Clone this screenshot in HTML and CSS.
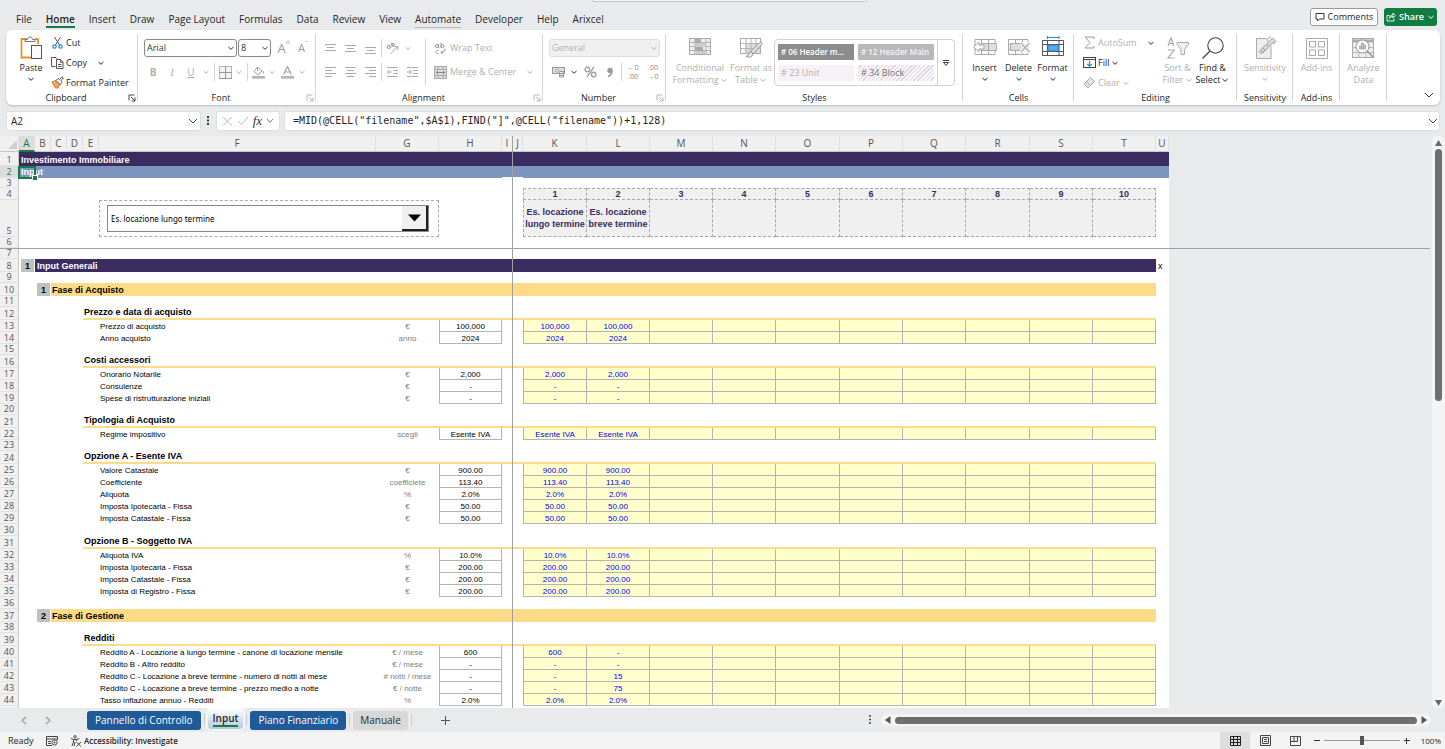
FILE: index.html
```html
<!DOCTYPE html>
<html lang="en">
<head>
<meta charset="utf-8">
<title>Investimento Immobiliare</title>
<link rel="stylesheet" href="styles.css">
</head>
<body>
<svg class="defs" aria-hidden="true">
  <symbol id="chev" viewBox="0 0 8 8"><path d="M1.500 3 4 5.300 6.500 3" fill="none" stroke="currentColor"/></symbol>
  <symbol id="launch" viewBox="0 0 8 8"><path d="M1 6.500V1H6.500M3 3 7 7M7 3.500V7H3.500" fill="none" stroke="currentColor"/></symbol>
</svg>

<header class="top">
  <div class="search-edge"></div>
  <nav class="tabs" aria-label="Ribbon tabs">
    <a href="#">File</a><a href="#" class="active">Home</a><a href="#">Insert</a><a href="#">Draw</a><a href="#">Page Layout</a><a href="#">Formulas</a><a href="#">Data</a><a href="#">Review</a><a href="#">View</a><a href="#" class="hint">Automate</a><a href="#">Developer</a><a href="#">Help</a><a href="#">Arixcel</a>
  </nav>
  <button class="comments"><svg width="10" height="10" viewBox="0 0 10 10"><path d="M1 1.500H9V7H4.500L2.500 9V7H1Z" fill="none" stroke="#333"/></svg>Comments</button>
  <button class="share"><svg width="10" height="10" viewBox="0 0 10 10"><path d="M3.500 3.500H1V9H8V6.500M3.500 6.500C3.500 4 5 3 7 3V1L9.300 3.500 7 6V4.300C5.500 4.300 4.300 5 3.500 6.500Z" fill="none" stroke="#fff" stroke-width=".9"/></svg>Share<svg class="chev"><use href="#chev"/></svg></button>
</header>

<section class="ribbon" aria-label="Home ribbon">
  <div class="group g-clipboard">
    <div class="body">
      <button class="big paste"><svg width="24" height="24" viewBox="0 0 24 24"><path d="M8 3H2.500V21.500H12M16 3H19V8" fill="none" stroke="#e8912d" stroke-width="1.800"/><path d="M6 5.500V3.500H8.500C9 .2 13 .2 13.500 3.500H16V5.500Z" fill="#fff" stroke="#777"/><rect x="12.500" y="9.500" width="10" height="13" fill="#fafafa" stroke="#555"/></svg><span>Paste</span><svg class="chev"><use href="#chev"/></svg></button>
      <div class="stack">
        <button><svg width="13" height="13" viewBox="0 0 13 13"><path d="M3.500 1 8.500 9M9.500 1 4.500 9" fill="none" stroke="#555"/><circle cx="3.500" cy="10.500" r="1.700" fill="none" stroke="#2b8ad6" stroke-width="1.200"/><circle cx="9.500" cy="10.500" r="1.700" fill="none" stroke="#2b8ad6" stroke-width="1.200"/></svg>Cut</button>
        <button><svg width="13" height="13" viewBox="0 0 13 13"><path d="M4.500 10.500H.5V1.500H5L6.500 3M5.500 3.500H9.500L12 6V12.500H5.500ZM9.300 3.500V6.300H12M7 8.500H10.500M7 10.500H10.500" fill="none" stroke="#555"/></svg>Copy<svg class="chev far"><use href="#chev"/></svg></button>
        <button><svg width="13" height="13" viewBox="0 0 13 13"><path d="M1 6 5 4.500 9 8.500 7 12 4.500 12Z" fill="#f6a55a" stroke="#d9731c"/><path d="M5 4.500 7 2.500 8.500 3.500 11 .8 12.300 2 10 4.800 11 6.500 9 8.500Z" fill="#fff" stroke="#555"/></svg>Format Painter</button>
      </div>
    </div>
    <div class="caption">Clipboard<svg class="launch dark"><use href="#launch"/></svg></div>
  </div>

  <div class="group g-font">
    <div class="body rows">
      <div class="row">
        <span class="field wide"><select aria-label="Font"><option>Arial</option></select><svg class="chev"><use href="#chev"/></svg></span>
        <span class="field narrow"><select aria-label="Font size"><option>8</option></select><svg class="chev"><use href="#chev"/></svg></span>
        <button class="ib off letter" aria-label="Increase font size">A<sup>^</sup></button>
        <button class="ib off letter small" aria-label="Decrease font size">A<sup>ˇ</sup></button>
      </div>
      <div class="row off">
        <button class="ib"><b>B</b></button><button class="ib serif"><i>I</i></button><button class="ib"><u>U</u></button><button class="cb" aria-label="Underline options"><svg class="chev"><use href="#chev"/></svg></button>
        <span class="sep"></span>
        <button class="ib s" aria-label="Borders"><svg width="13" height="13" viewBox="0 0 13 13"><rect x=".5" y=".5" width="12" height="12" fill="#f4f4f4" stroke="#b5b5b5"/><path d="M6.500 0V13M0 6.500H13M0 12.500H13" stroke="#9a9a9a"/></svg></button><button class="cb" aria-label="Border options"><svg class="chev"><use href="#chev"/></svg></button>
        <span class="sep"></span>
        <button class="ib s" aria-label="Fill color"><svg width="13" height="13" viewBox="0 0 13 13"><path d="M5.500 1 10 5 6 9 2 5.500ZM5.500 1V5M10.500 5C12 6.500 12 8 11.300 8" fill="none" stroke="#a0a0a0"/><rect y="10" width="13" height="2.600" fill="#b5b5b5"/></svg></button><button class="cb" aria-label="Fill options"><svg class="chev"><use href="#chev"/></svg></button>
        <button class="ib" aria-label="Font color"><svg width="13" height="13" viewBox="0 0 13 13"><path d="M2.500 8.500 6.500.5 10.500 8.500M4 6H9" fill="none" stroke="#a0a0a0" stroke-width="1.200"/><rect y="10" width="13" height="2.600" fill="#b5b5b5"/></svg></button><button class="cb" aria-label="Font color options"><svg class="chev"><use href="#chev"/></svg></button>
      </div>
    </div>
    <div class="caption">Font<svg class="launch"><use href="#launch"/></svg></div>
  </div>

  <div class="group g-align">
    <div class="body">
      <div class="rows">
        <div class="row off">
          <button class="ib" aria-label="Top align"><svg width="12" height="13"><path d="M0 2.500H11M2 5.500H9M0 8.500H11" stroke="#aaa"/></svg></button><button class="ib" aria-label="Middle align"><svg width="12" height="13"><path d="M0 3.500H11M2 6.500H9M0 9.500H11" stroke="#aaa"/></svg></button><button class="ib" aria-label="Bottom align"><svg width="12" height="13"><path d="M0 5.500H11M2 8.500H9M0 11.500H11" stroke="#aaa"/></svg></button>
          <span class="sep tight"></span>
          <button class="ib" aria-label="Orientation"><svg width="13" height="13" viewBox="0 0 13 13"><path d="M4.500 12 11.500 4.500M8.500 4.500H11.800V8" fill="none" stroke="#aaa"/><circle cx="2.700" cy="5" r="1.600" fill="none" stroke="#999"/><path d="M2.500 2.500 5 5.500M5 .5 7.500 4" stroke="#999"/><circle cx="7" cy="2.800" r="1.500" fill="none" stroke="#999"/></svg></button><button class="cb" aria-label="Orientation options"><svg class="chev"><use href="#chev"/></svg></button>
        </div>
        <div class="row off">
          <button class="ib" aria-label="Align left"><svg width="12" height="12"><path d="M0 1.500H11M0 4.500H7M0 7.500H11M0 10.500H7" stroke="#aaa"/></svg></button><button class="ib" aria-label="Center"><svg width="12" height="12"><path d="M0 1.500H11M2 4.500H9M0 7.500H11M2 10.500H9" stroke="#aaa"/></svg></button><button class="ib" aria-label="Align right"><svg width="12" height="12"><path d="M0 1.500H11M4 4.500H11M0 7.500H11M4 10.500H11" stroke="#aaa"/></svg></button>
          <span class="sep tight"></span>
          <button class="ib" aria-label="Decrease indent"><svg width="12" height="12"><path d="M0 1.500H11M6 4.500H11M6 7.500H11M0 10.500H11M5 6H.5M2.500 4 .5 6 2.500 8" fill="none" stroke="#aaa"/></svg></button><button class="ib" aria-label="Increase indent"><svg width="12" height="12"><path d="M0 1.500H11M6 4.500H11M6 7.500H11M0 10.500H11M0 6H4.500M2.500 4 4.500 6 2.500 8" fill="none" stroke="#aaa"/></svg></button>
        </div>
      </div>
      <span class="sep tall"></span>
      <div class="rows">
        <div class="row off"><button class="txt"><svg width="13" height="13" viewBox="0 0 13 13"><circle cx="3" cy="4" r="1.500" fill="none" stroke="#999"/><path d="M4.700 2V6M7 .5V6M4.500 8.500C2 7.500 0 12.500 4.500 11.500M11 6.500V8.500Q11 10.500 7 10.500M9 8.500 7 10.500 9 12.500" fill="none" stroke="#999"/><circle cx="8.600" cy="4" r="1.500" fill="none" stroke="#999"/></svg>Wrap Text</button></div>
        <div class="row off"><button class="txt"><svg width="13" height="13" viewBox="0 0 13 13"><rect x=".5" y=".5" width="12" height="12" fill="#ddd" stroke="#aaa"/><path d="M0 3.500H13M0 9.500H13M4 .5V3M9 .5V3M4 10V13M9 10V13" stroke="#aaa"/><path d="M2 6.500H11M4 5 2.200 6.500 4 8M9 5 10.800 6.500 9 8" fill="none" stroke="#888"/></svg>Merge &amp; Center</button><button class="cb" aria-label="Merge options"><svg class="chev"><use href="#chev"/></svg></button></div>
      </div>
    </div>
    <div class="caption">Alignment<svg class="launch"><use href="#launch"/></svg></div>
  </div>

  <div class="group g-number">
    <div class="body rows">
      <div class="row off"><span class="field full"><select aria-label="Number format" disabled><option>General</option></select><svg class="chev"><use href="#chev"/></svg></span></div>
      <div class="row off">
        <button class="ib" aria-label="Accounting format"><svg width="13" height="12" viewBox="0 0 13 12"><rect x=".5" y="1.500" width="12" height="6" fill="#ddd" stroke="#999"/><circle cx="5" cy="4.500" r="1.500" fill="#fff" stroke="#999"/><path d="M7.500 5.500H11.500V11H7.500ZM7.500 7.500H11.500M7.500 9.300H11.500" fill="#eee" stroke="#999"/></svg></button><button class="cb dark" aria-label="Accounting options"><svg class="chev"><use href="#chev"/></svg></button>
        <button class="ib" aria-label="Percent style"><svg width="13" height="12" viewBox="0 0 13 12"><circle cx="3.300" cy="3.500" r="2.300" fill="none" stroke="#999" stroke-width="1.200"/><circle cx="9.700" cy="8.500" r="2.300" fill="none" stroke="#999" stroke-width="1.200"/><path d="M10 .8 3 11.200" stroke="#999" stroke-width="1.200"/></svg></button>
        <button class="ib" aria-label="Comma style"><svg width="8" height="11" viewBox="0 0 8 11"><circle cx="4" cy="3.500" r="2.700" fill="#999"/><path d="M5.800 3.500Q6 8 2 9.500" fill="none" stroke="#999" stroke-width="1.600"/></svg></button>
        <span class="sep tight"></span>
        <button class="ib digits" aria-label="Increase decimal"><span>←0</span><span>.00</span></button>
        <button class="ib digits" aria-label="Decrease decimal"><span>.00</span><span>→0</span></button>
      </div>
    </div>
    <div class="caption">Number<svg class="launch"><use href="#launch"/></svg></div>
  </div>

  <div class="group g-styles">
    <div class="body">
      <button class="big off"><svg width="24" height="20" viewBox="0 0 24 20"><rect x="1.500" y="1.500" width="21" height="16" fill="#eee" stroke="#aaa"/><path d="M1.500 5.500H22.500M1.500 9.500H22.500M1.500 13.500H22.500M7 1.500V17.500M12 1.500V17.500M18 1.500V17.500" stroke="#b5b5b5"/><path d="M7 2H13V6H7ZM7 10H15V14H7Z" fill="#aaa"/><path d="M7 6H18V10H7ZM7 14H18V17H7Z" fill="#ccc"/></svg><span>Conditional</span><span>Formatting <svg class="chev"><use href="#chev"/></svg></span></button>
      <button class="big off"><svg width="24" height="22" viewBox="0 0 24 22"><rect x="1.500" y="2.500" width="20" height="15" fill="#fff" stroke="#aaa"/><rect x="6" y="7" width="15" height="10" fill="#ddd"/><path d="M1.500 7.500H21.500M1.500 12.500H21.500M7 2.500V17.500M12 2.500V17.500M17 2.500V17.500" stroke="#b5b5b5"/><path d="M22 5.500 12 15.500 14 17.500 23.500 7.500ZM12 16Q9 15.500 9.500 19L7 20.500Q13 22.500 14 18Z" fill="#e8e8e8" stroke="#999"/></svg><span>Format as</span><span>Table <svg class="chev"><use href="#chev"/></svg></span></button>
      <div class="gallery">
        <div class="swatches"><button class="sw1"># 06 Header m...</button><button class="sw2"># 12 Header Main</button><button class="sw3"># 23 Unit</button><button class="sw4"># 34 Block</button></div>
        <button class="more" aria-label="More styles"><svg width="8" height="8" viewBox="0 0 8 8"><path d="M1 1.500H7M1.500 3.500H6.500L4 6.500Z" fill="#fff" stroke="#444"/></svg></button>
      </div>
    </div>
    <div class="caption">Styles</div>
  </div>

  <div class="group g-cells">
    <div class="body">
      <button class="big"><svg width="26" height="22" viewBox="0 0 26 22"><path d="M3 3.500H23V18.500H3ZM3 13.500H23M3 8.500H23M9.500 3.500V18.500M16.500 3.500V18.500" fill="#fff" stroke="#aaa"/><path d="M9 7.500H24.500V14.500H9ZM16.500 7.500V14.500" fill="#ddd" stroke="#aaa"/><path d="M7 6 1.500 11 7 16V13H12V9H7Z" fill="#fafafa" stroke="#aaa"/></svg><span>Insert</span><svg class="chev"><use href="#chev"/></svg></button>
      <button class="big"><svg width="26" height="22" viewBox="0 0 26 22"><path d="M2.500 3.500H22V18.500H2.500ZM2.500 13.500H22M2.500 8.500H22M9.500 3.500V18.500M16.500 3.500V18.500" fill="#fff" stroke="#aaa"/><path d="M4.500 7.500H16L18 11 16 14.500H4.500Z" fill="#ddd" stroke="#aaa"/><path d="M15 7 23.500 16M23.500 7 15 16" stroke="#fff" stroke-width="3.500"/><path d="M15 7 23.500 16M23.500 7 15 16" stroke="#aaa" stroke-width="1.200"/></svg><span>Delete</span><svg class="chev"><use href="#chev"/></svg></button>
      <button class="big"><svg width="26" height="22" viewBox="0 0 26 22"><path d="M7.500 1.500H19M7.500 0V3M19 0V3" stroke="#2b8ad6"/><path d="M2.500 4.500H23.500V19.500H2.500ZM2.500 8.500H23.500M2.500 15.500H23.500M7.500 4.500V19.500M19 4.500V19.500" fill="#fff" stroke="#555"/><rect x="8" y="9" width="10.500" height="6" fill="#5aa9ea" stroke="#2b7cc4"/></svg><span>Format</span><svg class="chev"><use href="#chev"/></svg></button>
    </div>
    <div class="caption">Cells</div>
  </div>

  <div class="group g-edit">
    <div class="body">
      <div class="stack">
        <button class="off"><svg width="13" height="13" viewBox="0 0 13 13"><path d="M11 3V1H2L7 6.500 2 12H11V10" fill="none" stroke="#999"/></svg>AutoSum<svg class="chev far dark"><use href="#chev"/></svg></button>
        <button><svg width="13" height="13" viewBox="0 0 13 13"><rect x=".5" y="1.500" width="12" height="10" fill="#fff" stroke="#444"/><path d="M.5 3.500H12.500" stroke="#444"/><path d="M6.500 4.500V10M4.300 8 6.500 10.200 8.700 8" fill="none" stroke="#2b8ad6" stroke-width="1.200"/></svg>Fill<svg class="chev"><use href="#chev"/></svg></button>
        <button class="off"><svg width="13" height="13" viewBox="0 0 13 13"><path d="M1 8 7.500 1.500 11.500 5.500 5 12Z" fill="#e4e4e4" stroke="#aaa"/><path d="M3.500 5.500 7.500 9.500" stroke="#aaa"/></svg>Clear<svg class="chev"><use href="#chev"/></svg></button>
      </div>
      <button class="big off"><svg width="24" height="24" viewBox="0 0 24 24"><path d="M2 10 5 2 8 10M3 7.500H7M2 14H8L2 22H8.500" fill="none" stroke="#aaa" stroke-width="1.200"/><path d="M11 6.500H22.500V8.500L18.500 13.500V18.500H15V13.500L11 8.500Z" fill="#eee" stroke="#aaa"/></svg><span>Sort &amp;</span><span>Filter <svg class="chev"><use href="#chev"/></svg></span></button>
      <button class="big"><svg width="24" height="24" viewBox="0 0 24 24"><circle cx="14.500" cy="9.500" r="7.700" fill="#fff" stroke="#444" stroke-width="1.100"/><path d="M9 15 1.500 22.500" stroke="#444" stroke-width="1.300"/></svg><span>Find &amp;</span><span>Select <svg class="chev"><use href="#chev"/></svg></span></button>
    </div>
    <div class="caption">Editing</div>
  </div>

  <div class="group g-sens">
    <div class="body"><button class="big off"><svg width="24" height="24" viewBox="0 0 24 24"><path d="M3.500 2.500H13L18 10V22.500H3.500Z" fill="#eee" stroke="#aaa"/><path d="M6 15.500 13 8.500 15.500 11 8.500 18ZM14 7.500 19.500 2 22 4.500 16.500 10ZM14.500 3 17.500.5M20 8 23.500 5.500" fill="#ddd" stroke="#999"/><path d="M8 14 11 17M10 12 13 15" stroke="#999"/></svg><span>Sensitivity</span><svg class="chev"><use href="#chev"/></svg></button></div>
    <div class="caption">Sensitivity</div>
  </div>
  <div class="group g-addins">
    <div class="body"><button class="big off"><svg width="24" height="24" viewBox="0 0 24 24"><path d="M1.500 2.500H22.500V22.500H1.500ZM4.500 5.500H10.500V11H4.500ZM13.500 5.500H19.500V11H13.500ZM4.500 14H10.500V19.500H4.500ZM13.500 14H19.500V19.500H13.500Z" fill="#fff" stroke="#aaa"/></svg><span>Add-ins</span></button></div>
    <div class="caption">Add-ins</div>
  </div>
  <div class="group g-data">
    <div class="body"><button class="big off"><svg width="24" height="24" viewBox="0 0 24 24"><rect x="1.500" y="2.500" width="21" height="19" fill="#eee" stroke="#aaa"/><path d="M1.500 5H22.500" stroke="#aaa" stroke-width="3"/><path d="M1.500 11.500H22.500M1.500 16.500H22.500M8 16V21.500M15 16V21.500" stroke="#bbb"/><circle cx="11.500" cy="10.500" r="6.500" fill="#fff" stroke="#999"/><path d="M8.500 13V10H10.500V13ZM10.500 13V7H12.500V13ZM12.500 13V9H14.500V13Z" fill="#ccc" stroke="#999" stroke-width=".7"/><path d="M16 15 22.500 21.500" stroke="#999" stroke-width="1.600"/></svg><span>Analyze</span><span>Data</span></button></div>
    <div class="caption"></div>
  </div>
  <button class="collapse" aria-label="Collapse ribbon"><svg width="10" height="8"><path d="M1 2 5 6 9 2" fill="none" stroke="#333"/></svg></button>
</section>

<section class="formula-bar" aria-label="Formula bar">
  <div class="box name"><input aria-label="Name box" value="A2"><svg width="10" height="8"><path d="M1 2 5 6 9 2" fill="none" stroke="#444"/></svg></div>
  <svg class="dots" width="3" height="10"><path d="M0 1H2M0 4.500H2M0 8H2" stroke="#333" stroke-width="2"/></svg>
  <div class="box fx">
    <button aria-label="Cancel"><svg width="11" height="10"><path d="M1 1 10 9.500M10 1 1 9.500" stroke="#bbb"/></svg></button>
    <button aria-label="Enter"><svg width="12" height="10"><path d="M1 5 4.500 8.500 11 1" fill="none" stroke="#bbb"/></svg></button>
    <button class="fn" aria-label="Insert function"><i>fx</i></button>
    <button aria-label="Functions"><svg width="8" height="8"><path d="M1 2 4 5.500 7 2" fill="none" stroke="#777"/></svg></button>
  </div>
  <div class="box formula"><input aria-label="Formula" value="=MID(@CELL(&quot;filename&quot;,$A$1),FIND(&quot;]&quot;,@CELL(&quot;filename&quot;))+1,128)"><svg width="10" height="8"><path d="M1 2 5 6 9 2" fill="none" stroke="#444"/></svg></div>
</section>

<main class="workspace">
  <div class="sheet">
    <table class="grid">
      <colgroup><col class="c-num"><col class="c-s" span="5"><col class="c-f"><col class="c-v" span="2"><col class="c-i"><col class="c-j"><col class="c-w"><col class="c-v" span="3"><col class="c-w"><col class="c-v" span="2"><col class="c-w"><col class="c-v" span="2"><col class="c-u"></colgroup>
      <thead>
        <tr class="letters"><th class="corner"><svg width="9" height="9"><path d="M9 0V9H0Z" fill="#cfcfcf"/></svg></th><th class="on">A</th><th>B</th><th>C</th><th>D</th><th>E</th><th>F</th><th>G</th><th>H</th><th>I</th><th>J</th><th>K</th><th>L</th><th>M</th><th>N</th><th>O</th><th>P</th><th>Q</th><th>R</th><th>S</th><th>T</th><th>U</th></tr>
      </thead>
      <tbody>
        <tr class="h14"><th>1</th><td class="title" colspan="21">Investimento Immobiliare</td></tr>
        <tr class="h12"><th class="on">2</th><td class="subtitle" colspan="8">Input<span class="cursor"></span></td><td class="subtitle notch" colspan="2"></td><td class="subtitle" colspan="11"></td></tr>
        <tr class="h10"><th>3</th><td colspan="21"></td></tr>
        <tr class="h12 scen first"><th>4</th><td colspan="10"></td><td class="sc">1</td><td class="sc">2</td><td class="sc">3</td><td class="sc">4</td><td class="sc">5</td><td class="sc">6</td><td class="sc">7</td><td class="sc">8</td><td class="sc">9</td><td class="sc">10</td><td></td></tr>
        <tr class="h37 scen"><th>5</th><td colspan="5"></td><td class="picker" colspan="2"><span class="combo"><select aria-label="Scenario"><option>Es. locazione lungo termine</option><option>Es. locazione breve termine</option></select><span class="arrow"><svg width="13" height="8"><path d="M0 .5H13L6.500 7.500Z"/></svg></span></span></td><td colspan="3"></td><td class="sc">Es. locazione lungo termine</td><td class="sc">Es. locazione breve termine</td><td class="sc"></td><td class="sc"></td><td class="sc"></td><td class="sc"></td><td class="sc"></td><td class="sc"></td><td class="sc"></td><td class="sc"></td><td></td></tr>
        <tr class="h11"><th>6</th><td colspan="21"></td></tr>
        <tr class="h11"><th>7</th><td colspan="21"></td></tr>
      </tbody>
      <tbody id="rows"></tbody>
    </table>
    <div class="freeze-x"></div>
    <div class="freeze-y"></div>
  </div>
  <div class="vscroll"><svg width="7" height="6"><path d="M3.500 0 7 6H0Z" fill="#666"/></svg><div class="lane"><div class="thumb"></div></div><svg width="7" height="6"><path d="M0 0H7L3.500 6Z" fill="#666"/></svg></div>
</main>

<nav class="sheetbar" aria-label="Sheets">
  <button class="nav" aria-label="Previous sheet"><svg width="6" height="9"><path d="M5 1 1 4.500 5 8" fill="none" stroke="#999" stroke-width="1.200"/></svg></button>
  <button class="nav" aria-label="Next sheet"><svg width="6" height="9"><path d="M1 1 5 4.500 1 8" fill="none" stroke="#999" stroke-width="1.200"/></svg></button>
  <div class="sheets"><button class="tab blue">Pannello di Controllo</button><span class="bar"></span><button class="tab current"><span>Input</span></button><span class="bar"></span><button class="tab blue">Piano Finanziario</button><span class="bar"></span><button class="tab gray">Manuale</button><span class="bar"></span></div>
  <button class="add" aria-label="New sheet"><svg width="9" height="9"><path d="M4.500 0V9M0 4.500H9" stroke="#555"/></svg></button>
  <svg class="grip" width="3" height="10"><path d="M0 1H2M0 4.500H2M0 8H2" stroke="#444" stroke-width="1.500"/></svg>
  <div class="hscroll"><svg width="6" height="8"><path d="M5.500 0V8L0 4Z" fill="#555"/></svg><div class="thumb"></div><svg width="6" height="8"><path d="M.5 0V8L6 4Z" fill="#555"/></svg></div>
</nav>

<footer class="status">
  <span class="ready">Ready</span>
  <svg width="12" height="10" viewBox="0 0 12 10"><path d="M.5 .5H11.500V4M.5 .5V9.500H6M.5 3H11.500M2 5.500H5M2 7.500H5" fill="none" stroke="#444"/><circle cx="8.500" cy="6.500" r="2.600" fill="#fff" stroke="#444"/><circle cx="8.500" cy="6.500" r="1" fill="#444"/></svg>
  <button class="access"><svg width="12" height="12" viewBox="0 0 12 12"><circle cx="5" cy="1.800" r="1.200" fill="none" stroke="#444"/><path d="M.8 3.500 3.500 4.500V7L2 11M9.200 3.500 6.500 4.500V6M3.500 4.500H6.500M5 7 4 11M6.500 7 11 11.500M11 7 6.500 11.500" fill="none" stroke="#444"/></svg>Accessibility: Investigate</button>
  <div class="views">
    <button class="view on" aria-label="Normal view"><svg width="11" height="10"><path d="M.5 .5H10.500V9.500H.5ZM.5 3.500H10.500M.5 6.500H10.500M3.500 .5V9.500M7.500 .5V9.500" fill="none" stroke="#222"/></svg></button>
    <button class="view" aria-label="Page layout view"><svg width="11" height="11"><path d="M.5 .5H10.500V10.500H.5ZM2.500 2.500H8.500V8.500H2.500ZM4 4.500H7M4 6.500H7" fill="none" stroke="#444"/></svg></button>
    <button class="view" aria-label="Page break view"><svg width="11" height="10"><path d="M.5 .5H10.500V9.500H.5ZM.5 5.500H7.500V.5M4 .5V5" fill="none" stroke="#444"/></svg></button>
    <button class="zoom" aria-label="Zoom out"><svg width="6" height="6"><path d="M0 2.500H6" stroke="#333"/></svg></button>
    <input class="slider" type="range" min="0" max="100" value="50" aria-label="Zoom">
    <button class="zoom" aria-label="Zoom in"><svg width="6" height="6"><path d="M0 2.500H6M2.500 0V6" stroke="#333"/></svg></button>
    <span class="pct">100%</span>
  </div>
</footer>
<script src="rows.js"></script>
</body>
</html>
```
FILE: rows.js
```js
// Row kinds: blank, section, phase, head (title with rule), item (label, unit, active value, scenario values)
const rows = [
  ['section', 13, 'Input Generali', 1], ['blank', 11],
  ['phase', 13, 'Fase di Acquisto', 1], ['blank', 11],
  ['head', 13, 'Prezzo e data di acquisto'],
  ['item', 12, 'Prezzo di acquisto', '€', '100,000', '100,000', '100,000'],
  ['item', 12, 'Anno acquisto', 'anno', '2024', '2024', '2024'],
  ['blank', 11],
  ['head', 13, 'Costi accessori'],
  ['item', 12, 'Onorario Notarile', '€', '2,000', '2,000', '2,000'],
  ['item', 12, 'Consulenze', '€', '-', '-', '-'],
  ['item', 12, 'Spese di ristrutturazione iniziali', '€', '-', '-', '-'],
  ['blank', 11],
  ['head', 13, 'Tipologia di Acquisto'],
  ['item', 12, 'Regime impositivo', 'scegli', 'Esente IVA', 'Esente IVA', 'Esente IVA'],
  ['blank', 11],
  ['head', 13, 'Opzione A - Esente IVA'],
  ['item', 12, 'Valore Catastale', '€', '900.00', '900.00', '900.00'],
  ['item', 12, 'Coefficiente', 'coefficiete', '113.40', '113.40', '113.40'],
  ['item', 12, 'Aliquota', '%', '2.0%', '2.0%', '2.0%'],
  ['item', 12, 'Imposta Ipotecaria - Fissa', '€', '50.00', '50.00', '50.00'],
  ['item', 12, 'Imposta Catastale - Fissa', '€', '50.00', '50.00', '50.00'],
  ['blank', 12],
  ['head', 13, 'Opzione B - Soggetto IVA'],
  ['item', 12, 'Aliquota IVA', '%', '10.0%', '10.0%', '10.0%'],
  ['item', 12, 'Imposta Ipotecaria - Fissa', '€', '200.00', '200.00', '200.00'],
  ['item', 12, 'Imposta Catastale - Fissa', '€', '200.00', '200.00', '200.00'],
  ['item', 12, 'Imposta di Registro - Fissa', '€', '200.00', '200.00', '200.00'],
  ['blank', 12],
  ['phase', 13, 'Fase di Gestione', 2], ['blank', 11],
  ['head', 13, 'Redditi'],
  ['item', 12, 'Reddito A - Locazione a lungo termine - canone di locazione mensile', '€ / mese', '600', '600', '-'],
  ['item', 12, 'Reddito B - Altro reddito', '€ / mese', '-', '-', '-'],
  ['item', 12, 'Reddito C - Locazione a breve termine - numero di notti al mese', '# notti / mese', '-', '-', '15'],
  ['item', 12, 'Reddito C - Locazione a breve termine - prezzo medio a notte', '€ / notte', '-', '-', '75'],
  ['item', 12, 'Tasso inflazione annuo - Redditi', '%', '2.0%', '2.0%', '2.0%'],
  ['blank', 11],
];

const cell = (cls, span, text = '') =>
  `<td class="${cls}"${span > 1 ? ` colspan="${span}"` : ''}>${text}</td>`;

const build = {
  blank: () => cell('', 21),
  section: (t, n) => cell('no', 1, `<b>${n}</b>`) + cell('section', 19, t) + cell('mark', 1, 'x'),
  phase: (t, n) => cell('', 1) + cell('no', 1, `<b>${n}</b>`) + cell('phase', 18, t) + cell('', 1),
  head: (t) => cell('', 4) + cell('head', 16, t) + cell('', 1),
  item: (t, unit, v, a, b) => cell('', 5) + cell('label', 1, t) + cell('unit', 1, unit) +
    cell('value', 1, v) + cell('', 2) + cell('in start', 1, a) + cell('in', 1, b) +
    cell('in', 1).repeat(8) + cell('', 1),
};

document.getElementById('rows').innerHTML = rows
  .map(([kind, h, ...rest], i) => {
    const label = i + 8 <= 44 ? i + 8 : '';
    return `<tr class="h${h}"><th>${label}</th>${build[kind](...rest)}</tr>`;
  })
  .join('');
```
FILE: styles.css
```css
* { box-sizing: border-box; }
body {
  margin: 0;
  height: 100vh;
  display: flex;
  flex-direction: column;
  overflow: hidden;
  background: #e8eaec;
  color: #262626;
  font: 10px/12px "Open Sans", "Noto Sans", sans-serif;
}
button, select, input { font: inherit; color: inherit; border: 0; background: none; padding: 0; margin: 0; }
button { display: inline-flex; align-items: center; justify-content: center; white-space: nowrap; }
a { color: inherit; text-decoration: none; }
svg { display: block; flex: none; }
.defs { position: absolute; width: 0; height: 0; }
.chev { width: 8px; height: 8px; }
.off { color: #b0b0b0; }
.dark { color: #333; }

/* top tabs */
.top { position: relative; display: flex; align-items: center; height: 30px; padding: 8px 8px 0 16px; flex: none; }
.search-edge { position: absolute; left: 41%; right: 40%; top: 0; height: 2px; border: 1px solid #c4c6c8; border-top: 0; border-radius: 0 0 4px 4px; background: #f4f4f4; }
.tabs { display: flex; flex: 1; gap: 14px; height: 22px; }
.tabs a { padding-top: 5px; height: 20px; }
.tabs .active { font-weight: 600; border-bottom: 2px solid #1a7a46; }
.tabs .hint { border-bottom: 1px solid #bbb; }
.tabs a:nth-child(n+2) { margin-left: 0; }
.comments, .share { height: 18px; border-radius: 3px; gap: 3px; margin-bottom: 4px; font-size: 9px; }
.comments { width: 68px; background: #fff; border: 1px solid #999; margin-right: 6px; }
.share { width: 53px; background: #107c41; color: #fff; font-weight: 600; }

/* ribbon */
.ribbon { display: flex; height: 75px; margin: 0 5px 0 6px; background: #fff; border-radius: 6px; box-shadow: 0 1px 2px #b8babc; flex: none; font-size: 9px; }
.group { position: relative; display: flex; flex-direction: column; flex: none; }
.group::after { content: ""; position: absolute; right: 0; top: 4px; bottom: 4px; width: 1px; background: #d6d6d6; }
.body { flex: 1; display: flex; min-height: 0; }
.caption { position: relative; height: 12px; margin-bottom: 1px; text-align: center; }
.caption:has(.launch) { padding-right: 12px; }
.launch { position: absolute; right: 2px; top: 2px; width: 8px; height: 8px; color: #b5b5b5; }
.launch.dark { color: #444; }
.g-clipboard { width: 132px; }
.g-font { width: 178px; }
.g-align { width: 227px; }
.g-number { width: 123px; }
.g-styles { width: 297px; }
.g-cells { width: 111px; }
.g-edit { width: 163px; }
.g-sens { width: 56px; }
.g-addins { width: 47px; }
.g-data { width: 47px; }
.big { flex-direction: column; justify-content: flex-start; padding-top: 6px; }
.big > svg:first-child { height: 24px; margin-bottom: 2px; }
.big > span { display: flex; align-items: center; gap: 1px; }
.big > .chev { margin-top: 1px; }
.paste { width: 38px; margin: 0 1px 0 6px; }
.stack { display: flex; flex-direction: column; align-items: flex-start; gap: 7px; padding-top: 6px; }
.stack button { gap: 2px; height: 13px; }
.far { margin-left: 8px; }
.rows { display: flex; flex-direction: column; gap: 6px; padding-top: 9px; }
.row { display: flex; align-items: center; gap: 1px; height: 18px; }
.body.rows { padding-left: 6px; }
.g-align .body { padding-left: 5px; }
.ib { width: 18px; height: 18px; font-size: 10px; }
.ib.s { width: 15px; }
.g-align .ib { width: 19px; }
.ib.serif { font-family: "Liberation Serif", serif; font-size: 11px; }
.cb { width: 10px; height: 18px; }
.sep { width: 1px; height: 18px; margin: 0 2px; background: #d6d6d6; }
.sep.tight { margin: 0; }
.sep.tall { height: 46px; margin: 9px 8px 0 3px; }
.ib.letter { font-size: 13px; color: #999; }
.ib.small { font-size: 11px; }
.letter sup { font-size: 8px; line-height: 8px; align-self: flex-start; }
.txt { gap: 3px; }
.txt + .cb { margin-left: 8px; }
.field { position: relative; height: 18px; border: 1px solid #8a8a8a; border-radius: 3px; }
.field select { width: 100%; height: 16px; padding-left: 2px; appearance: none; opacity: 1; }
.field .chev { position: absolute; right: 1px; top: 4px; pointer-events: none; }
.wide { width: 93px; }
.narrow { width: 33px; margin-right: 3px; }
.row .field { color: #333; }
.row .full { width: 111px; background: #f0f0f0; border-color: #dcdcdc; color: #b0b0b0; }
.ib.digits { flex-direction: column; font-size: 7px; line-height: 9px; color: #888; }
.g-number .row { gap: 2px; }
.g-styles .body { padding-left: 6px; }
.g-styles .big { width: 56px; flex: none; }
.g-styles .big > svg:first-child, .g-cells .big > svg:first-child { height: 22px; margin-bottom: 4px; }
.g-styles .big + .big { width: 46px; }
.gallery { display: flex; width: 181px; height: 47px; margin: 9px 0 0; border: 1px solid #d0d0d0; border-radius: 4px; }
.swatches { display: grid; grid-template-columns: 76px 76px; grid-auto-rows: 16px; gap: 5px 4px; padding: 4px 3px; flex: 1; }
.swatches button { justify-content: flex-start; padding-left: 3px; }
.sw1 { background: #8c8c8c; color: #fff; }
.sw2 { background: #b9b7ba; color: #f4f4f4; }
.swatches .sw1, .swatches .sw2 { font-size: 8px; font-weight: 600; }
.sw3 { background: #f5f1f7; color: #b0b0b0; }
.sw4 { background: repeating-linear-gradient(135deg, #f9f6f9 0 2px, #ded6de 2px 3px); color: #777; }
.more { width: 17px; border-left: 1px solid #d0d0d0; }
.g-cells .body { padding: 0 5px; justify-content: space-between; }
.g-cells .big { width: 33px; }
.g-edit .body { padding-left: 9px; }
.g-edit .stack { width: 77px; }
.g-edit .big { width: 35px; }
.g-sens .body, .g-addins .body, .g-data .body { justify-content: center; }
.collapse { margin: auto 6px 6px auto; }

/* formula bar */
.formula-bar { display: flex; align-items: center; gap: 4px; height: 31px; padding: 1px 5px 0 6px; flex: none; }
.box { display: flex; align-items: center; height: 20px; background: #fff; border: 1px solid #dcdee0; border-radius: 3px; }
.box input { flex: 1; min-width: 0; padding-left: 4px; }
.name { width: 195px; padding-right: 2px; }
.dots { margin: 0 2px; }
.fx { width: 64px; justify-content: space-around; padding: 0 3px; }
.fn { font: 13px/14px "Liberation Serif", serif; color: #333; }
.formula { flex: 1; padding: 0 1px 0 4px; }
.formula input { font-family: "DejaVu Sans Mono", monospace; }

/* sheet */
.workspace { display: flex; flex: 1; min-height: 0; gap: 2px; }
.sheet { position: relative; flex: 1; overflow: hidden; }
.grid { width: 1169px; table-layout: fixed; border-spacing: 0; background: #fff; font: 8px/11px "Liberation Sans", Arial, sans-serif; color: #000; }
.c-num { width: 19px; } .c-s { width: 16px; } .c-f { width: 277px; }
.c-v { width: 63px; } .c-w { width: 64px; } .c-i { width: 11px; } .c-j { width: 10px; } .c-u { width: 13px; }
td, th { padding: 0; overflow: visible; white-space: nowrap; }
th { background: #f0f0f0; color: #555; font: 9px/10px "Open Sans", "Noto Sans", sans-serif; border-bottom: 1px solid #e2e2e2; border-right: 1px solid #c8c8c8; vertical-align: bottom; }
.letters { height: 16px; }
.letters th { font-size: 10px; line-height: 15px; border-bottom-color: #c8c8c8; border-right-color: #e0e0e0; }
.letters .corner { vertical-align: bottom; }
.corner svg { margin: 0 0 2px 8px; }
th.on { background: #dcdcdc; color: #1a7a46; }
.letters .on { border-bottom: 2px solid #1a7a46; line-height: 14px; }
.h10 { height: 10px; } .h11 { height: 11px; } .h12 { height: 12px; }
.h13 { height: 13px; } .h14 { height: 14px; } .h37 { height: 37px; }
.h10 th { line-height: 9px; }
.title, .subtitle { padding-left: 2px; font-size: 9px; font-weight: bold; color: #fff; }
.title { background: #3a2b61; padding-top: 2px; }
.subtitle { position: relative; background: #7b95be; }
.notch { border-bottom: 1px solid #fff; }
.cursor { position: absolute; left: -1px; top: 0; width: 18px; height: 13px; border: 2px solid #1a7a46; }
.cursor::after { content: ""; position: absolute; right: -3px; bottom: -3px; width: 4px; height: 4px; background: #1a7a46; outline: 1px solid #fff; }
.sc { background: #f0f0f0; color: #3a2b61; font-size: 9px; line-height: 12px; font-weight: bold; text-align: center; white-space: normal; border-right: 1px dashed #aaa; border-bottom: 1px dashed #aaa; }
.first .sc { border-top: 1px dashed #aaa; line-height: 10px; }
td:not(.sc) + .sc { border-left: 1px dashed #aaa; }
.picker { border: 1px dashed #aaa; padding: 0 9px 0 7px; }
.combo { display: flex; height: 27px; border: 1px solid #888; font: 8px/12px "Noto Sans", "Open Sans", sans-serif; }
.combo select { flex: 1; appearance: none; padding-left: 3px; }
.arrow { display: flex; align-items: center; justify-content: center; width: 26px; background: #f0f0f0; border-right: 2px solid #222; border-bottom: 2px solid #222; }
.no { background: #c0c0c0; background-clip: padding-box; text-align: center; border: solid #fff; border-width: 0 1px 0 2px; }
.no, .section, .phase, .head, .mark { font-size: 9px; }
.no, .section, .phase, .mark { padding-top: 2px; }
.section { background: #3a2b61; color: #fff; font-weight: bold; padding-left: 2px; }
.phase { background: #fedb87; font-weight: bold; padding-left: 1px; }
.head { font-weight: bold; padding-left: 1px; border-bottom: 2px solid #fedb87; }
.mark { padding-left: 2px; }
.label { padding-left: 1px; }
.unit { text-align: center; color: #808080; }
.value, .in { padding-top: 2px; line-height: 9px; }
.value { text-align: center; border: solid #b4b4b4; border-width: 0 1px 1px; }
.in { text-align: center; color: #00f; background: #ffffcc; border: solid #b4b4b4; border-width: 0 1px 1px 0; }
.in.start { border-left-width: 1px; }
.freeze-x { position: absolute; left: 0; right: 0; top: 112px; height: 1px; background: #a0a0a0; }
.freeze-y { position: absolute; left: 512px; top: 0; bottom: 0; width: 1px; background: #a0a0a0; }
.vscroll { display: flex; flex-direction: column; align-items: center; width: 13px; padding: 4px 0 2px; gap: 3px; background: #f4f4f4; border-radius: 6px; }
.lane { flex: 1; }
.thumb { background: #6e6e6e; border-radius: 4px; }
.lane .thumb { width: 7px; height: 46%; }

/* sheet tabs */
.sheetbar { display: flex; align-items: center; height: 24px; padding: 0 14px 0 12px; flex: none; }
.nav { width: 24px; height: 20px; }
.sheets { display: flex; align-items: center; height: 24px; margin-left: 27px; gap: 2px; line-height: 14px; }
.tab { height: 19px; padding: 0 8px; border-radius: 3px; }
.blue { background: #1f5a99; color: #fff; }
.gray { background: #d8d8d8; padding: 0 7px; }
.current { height: 21px; padding: 0 5px; background: linear-gradient(#fff, #b4c8e0); font-weight: 600; align-self: flex-start; outline: 2px solid #f2f3f4; }
.current span { border-bottom: 2px solid #1a7a46; }
.bar { width: 1px; height: 12px; margin: 0 1px; background: #ccc; }
.add { width: 20px; height: 20px; margin-left: 23px; }
.grip { margin-left: auto; margin-right: 9px; }
.hscroll { display: flex; align-items: center; gap: 4px; width: 550px; height: 12px; padding: 0 4px; background: #f4f4f4; border-radius: 6px; }
.hscroll .thumb { flex: 1; height: 7px; }

/* status bar */
.status { display: flex; align-items: center; height: 17px; padding: 0 4px 0 8px; background: #f3f3f3; font-size: 9px; flex: none; }
.ready { width: 38px; }
.access { gap: 2px; margin-left: 12px; font-size: 8px; font-weight: 600; }
.views { display: flex; align-items: center; margin-left: auto; }
.view { width: 30px; height: 17px; }
.view.on { background: #dedede; }
.zoom { width: 14px; height: 14px; }
.slider { appearance: none; width: 76px; height: 9px; background: linear-gradient(#999, #999) center / 100% 1px no-repeat; }
.slider::-webkit-slider-thumb { appearance: none; width: 4px; height: 9px; background: #555; }
.pct { width: 27px; text-align: right; font-size: 8px; }
```
